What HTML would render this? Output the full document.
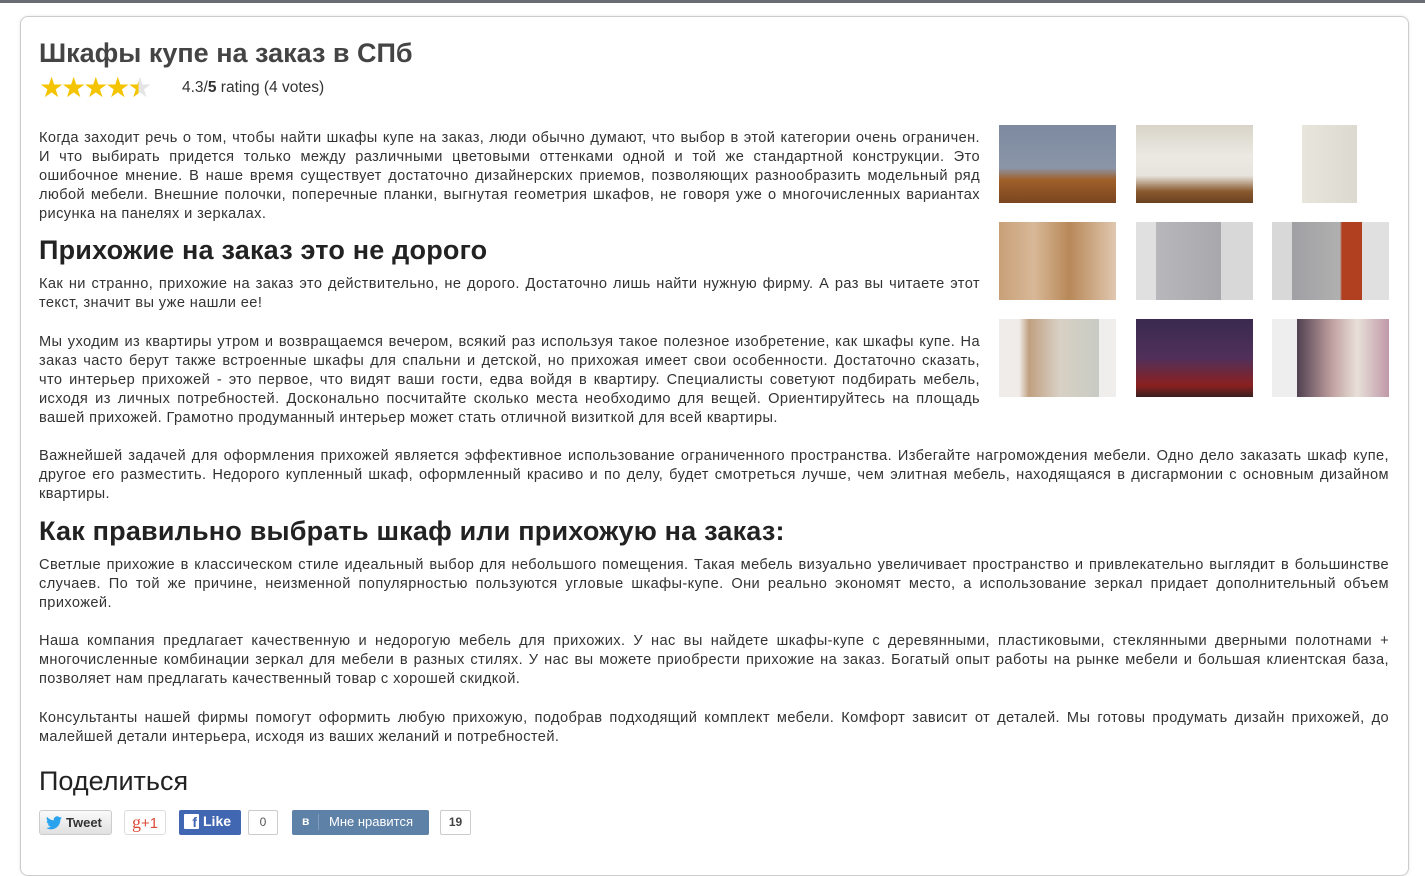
<!DOCTYPE html>
<html><head><meta charset="utf-8"><style>
*{margin:0;padding:0;box-sizing:border-box}
body{width:1425px;height:848px;background:#fff;font-family:"Liberation Sans",Arial,sans-serif;color:#333;position:relative;overflow:hidden}
.topbar{position:absolute;left:0;top:0;width:1425px;height:3px;background:#6b6b73}
.box{position:absolute;left:20px;top:16px;width:1389px;height:860px;border:1px solid #ccc;border-radius:8px;box-shadow:0 0 3px rgba(0,0,0,.1)}
.a{position:absolute;left:39px}
h1{font-size:27px;font-weight:bold;color:#444;line-height:30px}
h2{font-size:27px;font-weight:bold;color:#222;line-height:30px;letter-spacing:0.2px}
p{font-size:14.6px;line-height:19px;text-align:justify;color:#333;letter-spacing:0.4px}
.img{position:absolute;width:117px;height:78px}
.btn{position:absolute;top:810px;height:25px;font-size:14px;line-height:23px;border-radius:3px}
</style></head><body>
<div class="topbar"></div>
<div class="box"></div>
<h1 class="a" style="top:38px">Шкафы купе на заказ в СПб</h1>
<div class="a" style="top:74px;font-size:28px;color:#f5c400;letter-spacing:-3px;line-height:28px">★★★★<span style="background:linear-gradient(90deg,#f5c400 50%,#e4e4e4 50%);-webkit-background-clip:text;color:transparent">★</span></div>
<div style="position:absolute;left:182px;top:79px;font-size:15.5px;color:#333">4.3/<b>5</b> rating (4 votes)</div>
<p class="a" style="top:129px;width:941px">Когда заходит речь о том, чтобы найти шкафы купе на заказ, люди обычно думают, что выбор в этой категории очень ограничен. И что выбирать придется только между различными цветовыми оттенками одной и той же стандартной конструкции. Это ошибочное мнение. В наше время существует достаточно дизайнерских приемов, позволяющих разнообразить модельный ряд любой мебели. Внешние полочки, поперечные планки, выгнутая геометрия шкафов, не говоря уже о многочисленных вариантах рисунка на панелях и зеркалах.</p>
<h2 class="a" style="top:235px">Прихожие на заказ это не дорого</h2>
<p class="a" style="top:275px;width:941px">Как ни странно, прихожие на заказ это действительно, не дорого. Достаточно лишь найти нужную фирму. А раз вы читаете этот текст, значит вы уже нашли ее!</p>
<p class="a" style="top:333px;width:941px">Мы уходим из квартиры утром и возвращаемся вечером, всякий раз используя такое полезное изобретение, как шкафы купе. На заказ часто берут также встроенные шкафы для спальни и детской, но прихожая имеет свои особенности. Достаточно сказать, что интерьер прихожей - это первое, что видят ваши гости, едва войдя в квартиру. Специалисты советуют подбирать мебель, исходя из личных потребностей. Досконально посчитайте сколько места необходимо для вещей. Ориентируйтесь на площадь вашей прихожей. Грамотно продуманный интерьер может стать отличной визиткой для всей квартиры.</p>
<p class="a" style="top:447px;width:1350px">Важнейшей задачей для оформления прихожей является эффективное использование ограниченного пространства. Избегайте нагромождения мебели. Одно дело заказать шкаф купе, другое его разместить. Недорого купленный шкаф, оформленный красиво и по делу, будет смотреться лучше, чем элитная мебель, находящаяся в дисгармонии с основным дизайном квартиры.</p>
<h2 class="a" style="top:516px">Как правильно выбрать шкаф или прихожую на заказ:</h2>
<p class="a" style="top:556px;width:1350px">Светлые прихожие в классическом стиле идеальный выбор для небольшого помещения. Такая мебель визуально увеличивает пространство и привлекательно выглядит в большинстве случаев. По той же причине, неизменной популярностью пользуются угловые шкафы-купе. Они реально экономят место, а использование зеркал придает дополнительный объем прихожей.</p>
<p class="a" style="top:632px;width:1350px">Наша компания предлагает качественную и недорогую мебель для прихожих. У нас вы найдете шкафы-купе с деревянными, пластиковыми, стеклянными дверными полотнами + многочисленные комбинации зеркал для мебели в разных стилях. У нас вы можете приобрести прихожие на заказ. Богатый опыт работы на рынке мебели и большая клиентская база, позволяет нам предлагать качественный товар с хорошей скидкой.</p>
<p class="a" style="top:709px;width:1350px">Консультанты нашей фирмы помогут оформить любую прихожую, подобрав подходящий комплект мебели. Комфорт зависит от деталей. Мы готовы продумать дизайн прихожей, до малейшей детали интерьера, исходя из ваших желаний и потребностей.</p>
<div class="a" style="top:766px;font-size:27px;color:#222;line-height:30px">Поделиться</div>

<div class="img" style="left:999px;top:125px;background:linear-gradient(180deg,#7d8aa0 0%,#8a95a8 55%,#a0602a 70%,#7a4520 100%)"></div>
<div class="img" style="left:1136px;top:125px;background:linear-gradient(180deg,#d8d4c8 0%,#ebe9e2 40%,#e6e4dc 65%,#8a5a30 85%,#6a4020 100%)"></div>
<div class="img" style="left:1272px;top:125px;background:linear-gradient(90deg,#fff 0 30px,#e8e6dc 30px,#dcdad0 85px,#fff 85px)"></div>
<div class="img" style="left:999px;top:222px;background:linear-gradient(90deg,#c8a078,#d8b898 30%,#b88858 60%,#e0c8b0)"></div>
<div class="img" style="left:1136px;top:222px;background:linear-gradient(90deg,#e0e0e0 0 20px,#b8b8bc 20px,#a8a8ac 85px,#d8d8d8 85px)"></div>
<div class="img" style="left:1272px;top:222px;background:linear-gradient(90deg,#d8d8d8 0 20px,#a0a0a4 20px,#b0b0b0 68px,#b04020 70px,#b04020 90px,#e0e0e0 90px)"></div>
<div class="img" style="left:999px;top:319px;background:linear-gradient(90deg,#f0ecea 0 20px,#c0a080 30px,#d8d0c4 60px,#c8ccc4 100px,#f0eeec 100px)"></div>
<div class="img" style="left:1136px;top:319px;background:linear-gradient(180deg,#3a2a50,#50305a 50%,#8a2020 85%,#3a2020)"></div>
<div class="img" style="left:1272px;top:319px;background:linear-gradient(90deg,#eee 0 25px,#504050 25px,#c0a0a0 60px,#e8e0d8 85px,#c098a8)"></div>

<div class="btn" style="left:39px;width:73px;background:linear-gradient(#fafafa,#e0e0e0);border:1px solid #ccc;font-weight:bold;color:#333;padding-left:26px;font-size:13px"><svg style="position:absolute;left:6px;top:5px" width="16" height="14" viewBox="0 0 24 20"><path fill="#2aa3ef" d="M24 2.4a10 10 0 0 1-2.8.8A5 5 0 0 0 23.3.4a10 10 0 0 1-3.1 1.2A4.9 4.9 0 0 0 11.8 6 14 14 0 0 1 1.7.9a4.9 4.9 0 0 0 1.5 6.6A4.9 4.9 0 0 1 1 6.9a4.9 4.9 0 0 0 3.9 4.8 5 5 0 0 1-2.2.1 4.9 4.9 0 0 0 4.6 3.4A9.9 9.9 0 0 1 0 17.3 14 14 0 0 0 7.5 19.5c9 0 14-7.5 14-14v-.6A10 10 0 0 0 24 2.4z"/></svg>Tweet</div>
<div class="btn" style="left:124px;width:42px;border:1px solid #ddd;color:#dd4b39;text-align:center;font-size:15px"><span style="font-family:'Liberation Serif',serif;font-size:18px">g</span>+1</div>
<div class="btn" style="left:179px;width:62px;background:#4267b2;color:#fff;font-weight:bold;padding-left:24px;border-radius:2px"><span style="position:absolute;left:5px;top:4px;width:15px;height:15px;background:#fff;color:#4267b2;font-size:14px;line-height:17px;text-align:right;padding-right:2px;border-radius:1px">f</span>Like</div>
<div class="btn" style="left:248px;width:30px;border:1px solid #ccc;text-align:center;color:#555;font-size:12px;border-radius:2px">0</div>
<div class="btn" style="left:292px;width:137px;background:#5e81a8;color:#fff;font-size:13px;border-radius:2px"><span style="position:absolute;left:10px;font-weight:bold;font-size:12px">в</span><span style="position:absolute;left:26px;top:4px;width:1px;height:16px;background:#7f9cbd"></span><span style="position:absolute;left:37px">Мне нравится</span></div>
<div class="btn" style="left:440px;width:31px;border:1px solid #ccc;text-align:center;color:#444;font-size:12px;font-weight:bold;border-radius:2px">19</div>
</body></html>
